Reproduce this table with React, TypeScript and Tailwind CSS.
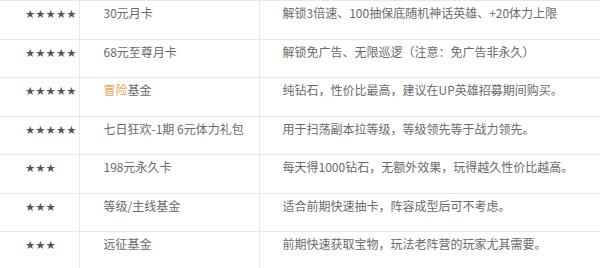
import React from "react";

const ROWS: [string, React.ReactNode, string][] = [
  ["★★★★★", "30元月卡", "解锁3倍速、100抽保底随机神话英雄、+20体力上限"],
  ["★★★★★", "68元至尊月卡", "解锁免广告、无限巡逻（注意：免广告非永久）"],
  [
    "★★★★★",
    <>
      <span className="text-[#f5a050]">冒险</span>基金
    </>,
    "纯钻石，性价比最高，建议在UP英雄招募期间购买。",
  ],
  ["★★★★★", "七日狂欢-1期 6元体力礼包", "用于扫荡副本拉等级，等级领先等于战力领先。"],
  ["★★★", "198元永久卡", "每天得1000钻石，无额外效果，玩得越久性价比越高。"],
  ["★★★", "等级/主线基金", "适合前期快速抽卡，阵容成型后可不考虑。"],
  ["★★★", "远征基金", "前期快速获取宝物，玩法老阵营的玩家尤其需要。"],
];

export default function App() {
  return (
    <div
      className="h-[268px] w-[600px] overflow-hidden bg-white text-[12px] leading-[18px] text-[#6a6a6a]"
      style={{ fontFamily: '"Noto Sans CJK SC", "Noto Sans", sans-serif' }}
    >
      <table className="w-[600px] table-fixed border-collapse">
        <colgroup>
          <col className="w-[79px]" />
          <col className="w-[180px]" />
          <col />
        </colgroup>
        <tbody>
          {ROWS.map(([stars, name, desc], i) => (
            <tr key={i} className="h-[38.5px] border-t border-[#e8e8e8] align-top">
              <td className="pl-[25px] pt-[3px] text-[#555]">
                <span className="font-['DejaVu_Sans'] text-[11.5px]">{stars}</span>
              </td>
              <td className="border-l border-[#e8e8e8] pl-[24px] pt-[3px]">{name}</td>
              <td className="border-l border-[#e8e8e8] pl-[23px] pt-[3px]">{desc}</td>
            </tr>
          ))}
        </tbody>
      </table>
    </div>
  );
}
